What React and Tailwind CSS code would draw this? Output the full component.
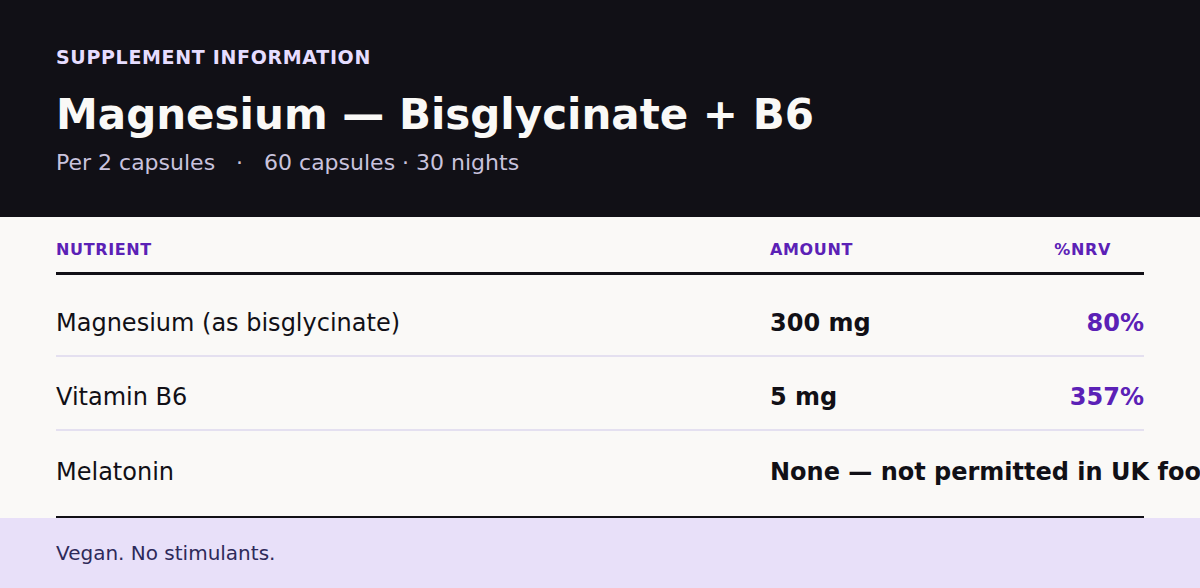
import React from "react";

const rows = [
  { name: "Magnesium (as bisglycinate)", amount: "300 mg", nrv: "80%" },
  { name: "Vitamin B6", amount: "5 mg", nrv: "357%" },
  { name: "Melatonin", amount: "None — not permitted in UK food supplements", nrv: "" },
];

const App = () => {
  return (
    <div className="w-[1200px] h-[588px] overflow-hidden flex flex-col font-['DejaVu_Sans',sans-serif]">
      {/* header */}
      <div className="h-[217px] shrink-0 bg-[#111016] px-14 pt-[45px]">
        <p className="text-[19px] font-bold tracking-[0.035em] text-[#e6ddff] leading-6">SUPPLEMENT INFORMATION</p>
        <h1 className="mt-[20px] text-[42px] font-bold text-[#faf9f7] leading-[52px]">
          Magnesium — Bisglycinate + B6
        </h1>
        <p className="mt-[8px] text-[22px] text-[#c9c3dd] leading-7 whitespace-pre">
          Per 2 capsules   ·   60 capsules · 30 nights
        </p>
      </div>

      {/* table */}
      <div className="flex-1 bg-[#faf9f7] px-14">
        <div className="flex items-end h-[58px] pb-[10px] border-b-[3px] border-[#111016] text-[16px] font-bold tracking-[0.04em] text-[#5b21b6]">
          <div className="w-[714px]">NUTRIENT</div>
          <div className="flex-1">AMOUNT</div>
          <div className="pr-[33px]">%NRV</div>
        </div>
        <div className="pt-2 pb-[11px] border-b-2 border-[#111016]">
          {rows.map((r, i) => (
            <div
              key={r.name}
              className={
                "flex items-center h-[74px] pt-2 text-[24px] " +
                (i < rows.length - 1 ? "border-b-2 border-[#e4e0f0]" : "")
              }
            >
              <div className="w-[714px] shrink-0 text-[#111016]">{r.name}</div>
              <div className="flex-1 min-w-0 whitespace-nowrap font-bold text-[#111016]">{r.amount}</div>
              {r.nrv && <div className="font-bold text-[#5b21b6] text-right">{r.nrv}</div>}
            </div>
          ))}
        </div>
      </div>

      {/* footer */}
      <div className="h-[70px] shrink-0 bg-[#e8e0f9] px-14 flex items-center">
        <p className="text-[20px] text-[#2e2a5a]">Vegan. No stimulants.</p>
      </div>
    </div>
  );
};

export default App;
